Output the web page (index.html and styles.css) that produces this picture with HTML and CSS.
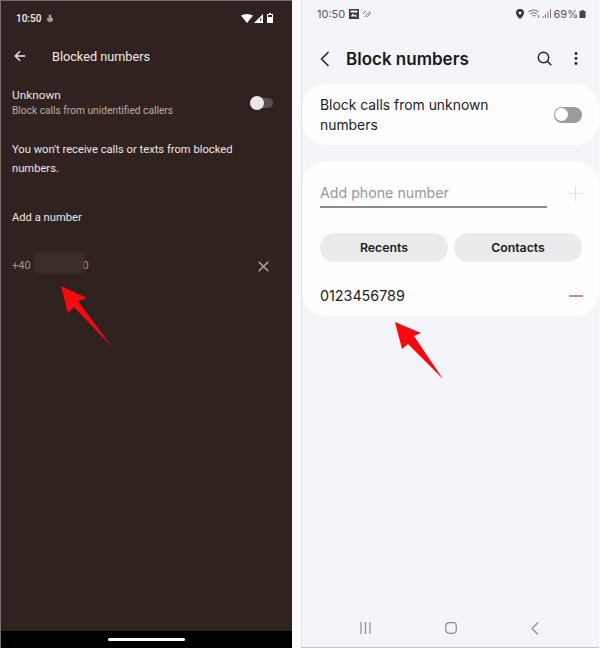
FILE: index.html
```html
<!DOCTYPE html>
<html lang="en">

<head>
    <meta charset="UTF-8">
    <meta name="viewport" content="width=device-width, initial-scale=1.0">
    <title>Block numbers</title>
    <link rel="stylesheet" href="styles.css">
</head>

<body>
    <div class="pixel">
        <div class="pixelMain">
            <div class="pixelStatus">
                <span class="pixelTime">10:50</span>
                <svg class="micIcon" width="6" height="9" viewBox="0 0 7 9"><path d="M2 0h3v4H2zM0 4h7v1.5a3.5 3 0 0 1-7 0zM3 7h1v2H3z" fill="#a89c96"/></svg>
                <span class="spacer"></span>
                <svg width="12" height="9" viewBox="0 0 12 9"><path d="M0 1.5Q6-1.5 12 1.5L6 9z" fill="#fff"/></svg>
                <svg width="9" height="9" viewBox="0 0 9 9"><path d="M9 0v9H0z" fill="#fff"/><path d="M6.3 4h1v3h-1z" fill="#30231f"/></svg>
                <svg class="battery" width="6" height="10" viewBox="0 0 6 10"><path d="M2 0h2v1h2v9H0V1h2z" fill="#fff"/><path d="M1 2h4v2H1z" fill="#30231f"/></svg>
            </div>
            <div class="pixelHeader">
                <svg width="12" height="12" viewBox="0 0 14 14"><path d="M13 7H2M7 1.5 1.5 7 7 12.5" fill="none" stroke="#f0ebe8" stroke-width="1.6"/></svg>
                <span>Blocked numbers</span>
            </div>
            <div class="unknownRow">
                <div>
                    <div class="rowTitle">Unknown</div>
                    <div class="rowSub">Block calls from unidentified callers</div>
                </div>
                <div class="darkSwitch"><span class="darkKnob"></span></div>
            </div>
            <p class="note">You won't receive calls or texts from blocked numbers.</p>
            <div class="addNumber">Add a number</div>
            <div class="numberRow">
                <span>+40</span>
                <span class="blurred"></span>
                <span class="lastDigit">0</span>
                <span class="spacer"></span>
                <svg width="11" height="11" viewBox="0 0 11 11"><path d="M.7.7l9.6 9.6M10.3.7.7 10.3" stroke="#b5aca6" stroke-width="1.4"/></svg>
            </div>
        </div>
        <div class="pixelNav"><span class="homeBar"></span></div>
    </div>

    <div class="samsung">
        <div class="samStatus">
            <span>10:50</span>
            <svg width="10" height="10" viewBox="0 0 10 10"><path d="M0 0h10v10H0z" fill="#3a3a3c"/><path d="M1.5 7.5 4 4.500l1.500 2 1-1 2 2zM1.500 1.500h7v2h-7z" fill="#f4f4fa"/></svg>
            <svg width="9" height="8" viewBox="0 0 9 8"><path d="M0 4 3 1M1.500 7l6-6M4 7l4-4" stroke="#77777a" stroke-width="1"/></svg>
            <span class="spacer"></span>
            <svg class="pin" width="8" height="10" viewBox="0 0 8 10"><path fill-rule="evenodd" d="M4 0a4 4 0 0 1 4 4C8 6.500 4 10 4 10S0 6.500 0 4a4 4 0 0 1 4-4zm0 2.500a1.500 1.500 0 1 0 0 3 1.500 1.500 0 0 0 0-3z" fill="#333"/></svg>
            <svg width="14" height="10" viewBox="0 0 13 10"><path d="M1 3q5-4 10 0M3 5q3-2.500 6 0M5 7q1.500-1 3 0" fill="none" stroke="#77777a" stroke-width="1.100"/><path d="M11 6v3" stroke="#77777a"/></svg>
            <svg class="signal" width="9" height="9" viewBox="0 0 9 9"><path d="M.5 7h1v2h-1zM3 5h1v4H3zM5.500 2.500h1V9h-1zM8 0h1v9H8z" fill="#77777a"/></svg>
            <span class="samBattery">69%</span>
            <svg width="7" height="8" viewBox="0 0 6 8"><path d="M2 0h2v1h2v7H0V1h2z" fill="#444"/></svg>
        </div>
        <div class="samHeader">
            <svg width="10" height="16" viewBox="0 0 10 16"><path d="M8.500 1 1.500 8l7 7" fill="none" stroke="#222" stroke-width="1.500"/></svg>
            <span class="samTitle">Block numbers</span>
            <svg class="searchIcon" width="15" height="15" viewBox="0 0 15 15"><circle cx="6.500" cy="6.500" r="5.200" fill="none" stroke="#222" stroke-width="1.400"/><path d="M10.300 10.300 14.300 14.300" stroke="#222" stroke-width="1.400"/></svg>
            <svg class="moreIcon" width="4" height="13" viewBox="0 0 4 13"><circle cx="2" cy="1.500" r="1.400" fill="#222"/><circle cx="2" cy="6.500" r="1.400" fill="#222"/><circle cx="2" cy="11.500" r="1.400" fill="#222"/></svg>
        </div>
        <div class="card unknownCard">
            <span class="unknownText">Block calls from unknown numbers</span>
            <div class="lightSwitch"><span class="lightKnob"></span></div>
        </div>
        <div class="card numbersCard">
            <div class="phoneRow">
                <div class="phoneInput">Add phone number</div>
                <svg width="15" height="15" viewBox="0 0 15 15"><path d="M7.500 0v15M0 7.500h15" stroke="#cfe8e8" stroke-width="1.200"/></svg>
            </div>
            <div class="pillRow">
                <div class="pill">Recents</div>
                <div class="pill">Contacts</div>
            </div>
            <div class="blockedRow">
                <span>0123456789</span>
                <span class="minus"></span>
            </div>
        </div>
        <span class="spacer"></span>
        <div class="samNav">
            <svg width="11" height="12" viewBox="0 0 11 12"><path d="M1 0v12M5.500 0v12M10 0v12" stroke="#8d8d92" stroke-width="1.200"/></svg>
            <svg width="12" height="12" viewBox="0 0 12 12"><rect x=".7" y=".7" width="10.600" height="10.600" rx="3.500" fill="none" stroke="#8d8d92" stroke-width="1.200"/></svg>
            <svg width="8" height="13" viewBox="0 0 8 13"><path d="M7 .5 1 6.500l6 6" fill="none" stroke="#8d8d92" stroke-width="1.200"/></svg>
        </div>
    </div>

    <!-- red arrows drawn over both screenshots -->
    <svg class="arrows" width="600" height="648" viewBox="0 0 600 648">
        <path d="M61 286 87 298 78 301 112 347 74 307 68 313z" fill="#f8090f"/>
        <path d="M395 322 421 333 414 336 443 379 408 344 402 349z" fill="#f8090f"/>
    </svg>
</body>

</html>
```

FILE: styles.css
```css
html,
body {
    margin: 0;
    padding: 0;
}

body {
    width: 600px;
    height: 648px;
    display: flex;
    position: relative;
    overflow: hidden;
    background-color: #fbfbfb;
}

.spacer {
    flex: 1;
}

/* left phone */
.pixel {
    width: 292px;
    height: 648px;
    box-sizing: border-box;
    display: flex;
    flex-direction: column;
    border-left: 1px solid #77706c;
    border-top: 1px solid #77706c;
    font-family: Roboto, sans-serif;
    color: #f0ebe8;
}

.pixelMain {
    flex: 1;
    background-color: #30231f;
    padding: 0 18px 0 11px;
}

.pixelStatus {
    height: 34px;
    display: flex;
    align-items: center;
    gap: 1px;
    padding: 0 1px 0 4px;
}

.pixelTime {
    font-size: 10px;
    font-weight: 500;
    color: #f6f2f0;
    margin-right: 5px;
}

.battery {
    margin-left: 3px;
}

.pixelHeader {
    height: 42px;
    display: flex;
    align-items: center;
    gap: 26px;
    font-size: 12.7px;
    padding-left: 2px;
}

.unknownRow {
    display: flex;
    justify-content: space-between;
    align-items: center;
    margin-top: 10px;
}

.rowTitle {
    font-size: 11.8px;
    line-height: 16px;
    color: #e8e1dd;
}

.rowSub {
    font-size: 10.2px;
    line-height: 16px;
    color: #bcaca4;
}

.darkSwitch {
    width: 23px;
    height: 10px;
    border-radius: 5px;
    background-color: #5a4f4b;
    display: flex;
    align-items: center;
    margin-right: 1px;
}

.darkKnob {
    width: 14px;
    height: 14px;
    border-radius: 50%;
    background-color: #ebe7e5;
}

.note {
    margin: 21px 0 0;
    font-size: 11.2px;
    line-height: 19px;
    color: #ece6e3;
}

.addNumber {
    margin-top: 32px;
    font-size: 11.2px;
    line-height: 16px;
    color: #ece6e3;
}

.numberRow {
    display: flex;
    align-items: center;
    margin-top: 29px;
    height: 20px;
    font-size: 11px;
    color: #a3958d;
}

.numberRow span:first-child,
.lastDigit {
    padding-top: 1px;
}

.blurred {
    width: 50px;
    height: 20px;
    margin-left: 3px;
    margin-top: -4px;
    background-color: #3b2e28;
    filter: blur(1px);
}

.lastDigit {
    margin-left: -1px;
}

.numberRow svg {
    margin-right: 5px;
    margin-top: 3px;
}

.pixelNav {
    height: 17px;
    background-color: #000;
    display: flex;
    justify-content: center;
    padding-top: 7px;
    box-sizing: border-box;
}

.homeBar {
    width: 77px;
    height: 3px;
    border-radius: 2px;
    background-color: #fff;
}

/* right phone */
.samsung {
    width: 298px;
    margin-left: 9px;
    height: 648px;
    box-sizing: border-box;
    display: flex;
    flex-direction: column;
    border-left: 1px solid #dedede;
    border-bottom: 1px solid #c4c4c4;
    background-color: #f4f4fa;
    font-family: Inter, sans-serif;
    color: #1c1c1e;
}

.samStatus {
    height: 27px;
    display: flex;
    align-items: center;
    gap: 4px;
    padding: 0 13px 0 15px;
    font-size: 11px;
    color: #58585a;
}

.samBattery {
    font-size: 11px;
    margin: 0 -3px 0 -1px;
}

.signal {
    margin-left: -3px;
}

.pin {
    margin-right: -1px;
}

.samHeader {
    height: 57px;
    display: flex;
    align-items: center;
    padding: 6px 21px 0 18px;
    box-sizing: border-box;
}

.samTitle {
    flex: 1;
    margin-left: 16px;
    font-size: 17px;
    font-weight: 600;
    color: #1a1a1c;
}

.searchIcon {
    margin-right: 22px;
}

.card {
    background-color: #fefeff;
    border-radius: 24px;
}

.unknownCard {
    height: 61px;
    box-sizing: border-box;
    display: flex;
    align-items: center;
    justify-content: space-between;
    padding: 0 17px 0 18px;
}

.unknownText {
    width: 210px;
    font-size: 13.9px;
    line-height: 20px;
    color: #222;
}

.lightSwitch {
    width: 26px;
    height: 16px;
    border-radius: 8px;
    background-color: #9c9c9e;
    display: flex;
    align-items: center;
    padding: 0 1px;
}

.lightKnob {
    width: 13px;
    height: 13px;
    border-radius: 50%;
    background-color: #fff;
}

.numbersCard {
    margin-top: 16px;
    height: 155px;
    box-sizing: border-box;
    padding: 0 16px 0 18px;
}

.phoneRow {
    display: flex;
    align-items: center;
    justify-content: space-between;
    padding-top: 17px;
}

.phoneInput {
    width: 227px;
    height: 30px;
    box-sizing: border-box;
    border-bottom: 2px solid #8c8c8e;
    font-size: 14.2px;
    line-height: 30px;
    color: #97979b;
}

.pillRow {
    display: flex;
    gap: 6px;
    margin-top: 25px;
    margin-right: 1px;
}

.pill {
    flex: 1;
    height: 29px;
    border-radius: 15px;
    background-color: #ebebed;
    text-align: center;
    font-size: 12.3px;
    font-weight: 600;
    line-height: 29px;
    color: #1c1c1e;
}

.blockedRow {
    display: flex;
    align-items: center;
    justify-content: space-between;
    margin-top: 24px;
    font-size: 14.3px;
    line-height: 20px;
    color: #222;
}

.minus {
    width: 14px;
    height: 2px;
    background-color: #c98a88;
}

.samNav {
    height: 38px;
    display: flex;
    align-items: center;
    justify-content: space-between;
    padding: 0 60px 0 58px;
    box-sizing: border-box;
}

.arrows {
    position: absolute;
    left: 0;
    top: 0;
    pointer-events: none;
}
```
